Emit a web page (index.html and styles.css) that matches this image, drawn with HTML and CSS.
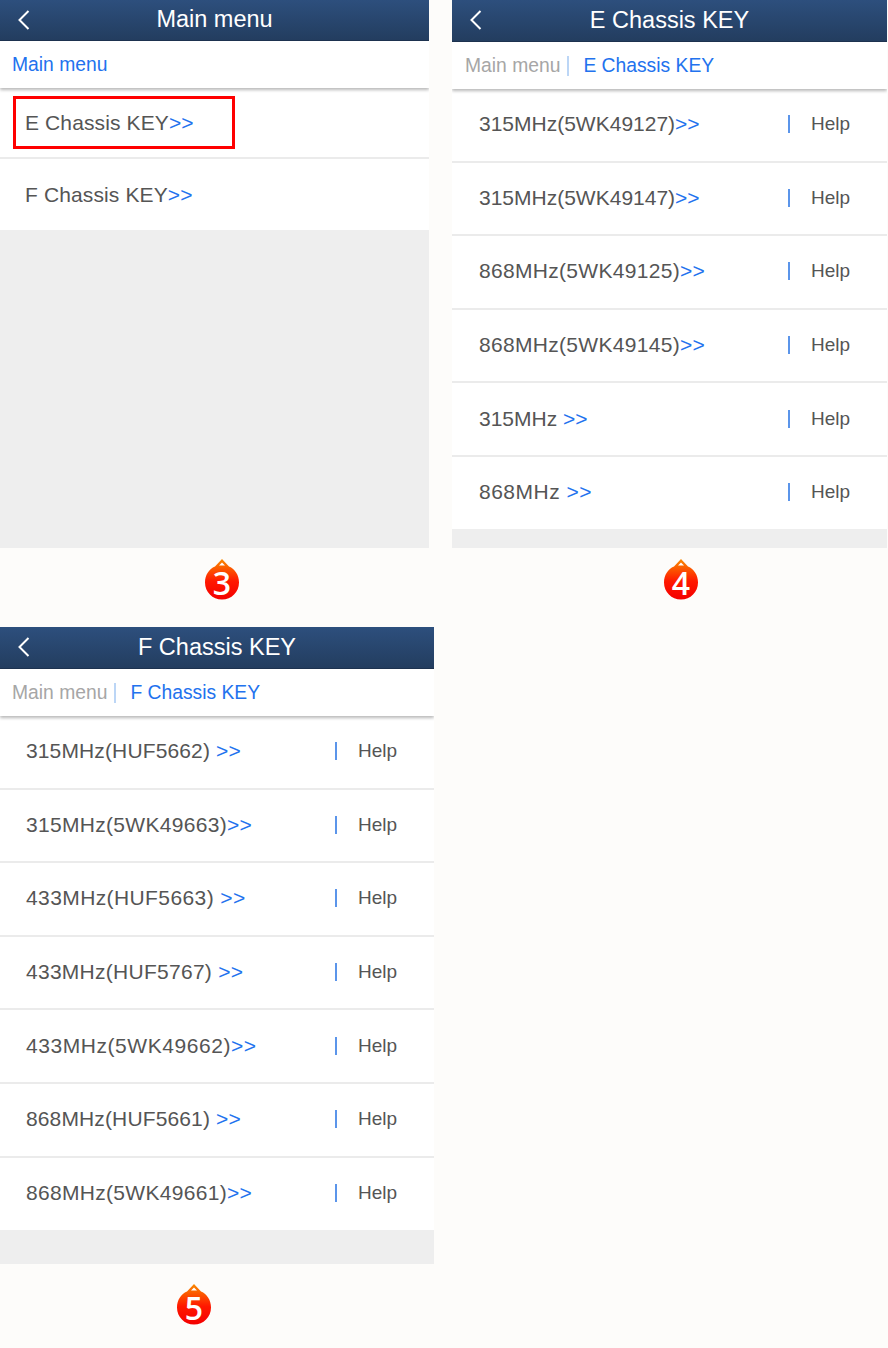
FILE: index.html
```html
<!DOCTYPE html>
<html lang="en">
<head>
<meta charset="utf-8">
<title>Chassis KEY</title>
<link rel="stylesheet" href="styles.css">
</head>
<body>
<div class="sheet">
  <div class="col col-left">
    <section class="screen screen-main">
      <header class="bar"><svg class="back" viewBox="0 0 13 20"><path d="M11.500 1 2.500 10l9 9"/></svg><h1>Main menu</h1></header>
      <nav class="crumbs"><span class="here">Main menu</span></nav>
      <ul class="menu">
        <li class="row row-main"><span class="marked"></span><span class="label">E Chassis KEY<b>&gt;&gt;</b></span></li>
        <li class="row row-main"><span class="label">F Chassis KEY<b>&gt;&gt;</b></span></li>
      </ul>
    </section>
    <div class="step step-3">
      <svg class="drop" viewBox="0 0 34 41"><defs><linearGradient id="g3" x1="0" y1="0" x2="0" y2="1"><stop offset="0" stop-color="#f98a00"/><stop offset=".55" stop-color="#ff1800"/><stop offset="1" stop-color="#f40000"/></linearGradient></defs><path fill="url(#g3)" d="M17 0 24 7.500C30 10 34 16 34 23.500 34 33 26.500 40.500 17 40.500S0 33 0 23.500C0 16 4 10 10 7.500Z"/><path fill="#fff" d="M17 3.500 20 6.500H14Z"/></svg>
      <span>3</span>
    </div>
    <section class="screen screen-f">
      <header class="bar"><svg class="back" viewBox="0 0 13 20"><path d="M11.500 1 2.500 10l9 9"/></svg><h1>F Chassis KEY</h1></header>
      <nav class="crumbs"><span class="up">Main menu</span><span class="here">F Chassis KEY</span></nav>
      <ul class="menu">
        <li class="row"><span class="label t2">315MHz(HUF5662) <b>&gt;&gt;</b></span><span class="help">Help</span></li>
        <li class="row"><span class="label t5">315MHz(5WK49663)<b>&gt;&gt;</b></span><span class="help">Help</span></li>
        <li class="row"><span class="label t6">433MHz(HUF5663) <b>&gt;&gt;</b></span><span class="help">Help</span></li>
        <li class="row"><span class="label t4">433MHz(HUF5767) <b>&gt;&gt;</b></span><span class="help">Help</span></li>
        <li class="row"><span class="label t9">433MHz(5WK49662)<b>&gt;&gt;</b></span><span class="help">Help</span></li>
        <li class="row"><span class="label t2">868MHz(HUF5661) <b>&gt;&gt;</b></span><span class="help">Help</span></li>
        <li class="row"><span class="label t5">868MHz(5WK49661)<b>&gt;&gt;</b></span><span class="help">Help</span></li>
      </ul>
    </section>
    <div class="step step-5">
      <svg class="drop" viewBox="0 0 34 41"><defs><linearGradient id="g5" x1="0" y1="0" x2="0" y2="1"><stop offset="0" stop-color="#f98a00"/><stop offset=".55" stop-color="#ff1800"/><stop offset="1" stop-color="#f40000"/></linearGradient></defs><path fill="url(#g5)" d="M17 0 24 7.500C30 10 34 16 34 23.500 34 33 26.500 40.500 17 40.500S0 33 0 23.500C0 16 4 10 10 7.500Z"/><path fill="#fff" d="M17 3.500 20 6.500H14Z"/></svg>
      <span>5</span>
    </div>
  </div>
  <div class="col col-right">
    <section class="screen screen-e">
      <header class="bar"><svg class="back" viewBox="0 0 13 20"><path d="M11.500 1 2.500 10l9 9"/></svg><h1>E Chassis KEY</h1></header>
      <nav class="crumbs"><span class="up">Main menu</span><span class="here">E Chassis KEY</span></nav>
      <ul class="menu">
        <li class="row"><span class="label">315MHz(5WK49127)<b>&gt;&gt;</b></span><span class="help">Help</span></li>
        <li class="row"><span class="label">315MHz(5WK49147)<b>&gt;&gt;</b></span><span class="help">Help</span></li>
        <li class="row"><span class="label t5">868MHz(5WK49125)<b>&gt;&gt;</b></span><span class="help">Help</span></li>
        <li class="row"><span class="label t5">868MHz(5WK49145)<b>&gt;&gt;</b></span><span class="help">Help</span></li>
        <li class="row"><span class="label">315MHz <b>&gt;&gt;</b></span><span class="help">Help</span></li>
        <li class="row"><span class="label t-short">868MHz <b>&gt;&gt;</b></span><span class="help">Help</span></li>
      </ul>
    </section>
    <div class="step step-4">
      <svg class="drop" viewBox="0 0 34 41"><defs><linearGradient id="g4" x1="0" y1="0" x2="0" y2="1"><stop offset="0" stop-color="#f98a00"/><stop offset=".55" stop-color="#ff1800"/><stop offset="1" stop-color="#f40000"/></linearGradient></defs><path fill="url(#g4)" d="M17 0 24 7.500C30 10 34 16 34 23.500 34 33 26.500 40.500 17 40.500S0 33 0 23.500C0 16 4 10 10 7.500Z"/><path fill="#fff" d="M17 3.500 20 6.500H14Z"/></svg>
      <span>4</span>
    </div>
  </div>
</div>
</body>
</html>
```
FILE: styles.css
```css
* { box-sizing: border-box; }
html, body { margin: 0; padding: 0; }
body {
  width: 888px;
  height: 1348px;
  overflow: hidden;
  background: #fdfcfa;
  font-family: "Liberation Sans", Arial, sans-serif;
  color: #555;
}
.sheet { display: flex; align-items: flex-start; }
.col-left { width: 452px; }
.col-right { width: 436px; }

.screen { background: #eee; display: flex; flex-direction: column; overflow: hidden; }
.screen-main { width: 429px; height: 548px; }
.screen-e { width: 435px; height: 548px; }
.screen-f { width: 434px; height: 637px; }

.bar {
  height: 42px;
  flex: none;
  display: flex;
  align-items: center;
  justify-content: center;
  background: linear-gradient(#2d4f7d, #233d5f);
  border-bottom: 1px solid #1e3350;
  position: relative;
}
.screen-main .bar { height: 41px; }
.bar h1 { margin: 0 0 1px; font-size: 23.500px; font-weight: 400; color: #fff; }
.back {
  position: absolute;
  left: 17px;
  top: 10px;
  width: 13px;
  height: 20px;
  fill: none;
  stroke: #fff;
  stroke-width: 2;
}

.crumbs {
  height: 47px;
  flex: none;
  display: flex;
  align-items: center;
  padding: 0 12px;
  background: #fff;
  font-size: 19.300px;
  box-shadow: 0 2px 3px rgba(0, 0, 0, .28);
  position: relative;
}
.here { color: #2272ee; }
.up { color: #a6a6a6; padding-right: 7px; border-right: 2px solid #bcd6f6; line-height: 20px; margin-right: 14px; }
.screen-e .crumbs { padding-left: 13px; }

.menu { list-style: none; margin: 0; padding: 0; background: #fff; }
.row {
  height: 73.600px;
  display: flex;
  align-items: center;
  justify-content: space-between;
  padding: 0 0 1px 27px;
  border-bottom: 2px solid #ebebeb;
  position: relative;
}
.row:last-child { border-bottom: 0; height: 72px; }
.label { font-size: 21px; color: #555; }
.label b { font-weight: 400; color: #2272ee; }
.t2 { letter-spacing: .13px; }
.t4 { letter-spacing: .27px; }
.t5 { letter-spacing: .31px; }
.t6 { letter-spacing: .4px; }
.t9 { letter-spacing: .56px; }
.t-short { letter-spacing: .5px; }
.help {
  width: 100px;
  height: 18px;
  display: flex;
  align-items: center;
  padding-left: 21px;
  margin-right: -1px;
  font-size: 19px;
  color: #555;
  border-left: 2px solid #5b95ea;
}
.screen-f .row { padding-left: 26px; }

.row.row-main { height: 71px; padding: 0 0 0 25px; justify-content: flex-start; }
.row-main .label { letter-spacing: .12px; }
.marked {
  position: absolute;
  left: 13px;
  top: 8px;
  width: 222px;
  height: 53px;
  border: 3px solid #f00;
}

.step { position: relative; width: 34px; height: 41px; }
.drop { display: block; width: 34px; height: 41px; }
.step span {
  position: absolute;
  left: 0;
  right: 0;
  top: 7px;
  text-align: center;
  font-family: "Open Sans", sans-serif;
  font-size: 32px;
  line-height: 34px;
  font-weight: 600;
  color: #fff;
}
.step-3 { margin: 11px 0 27px 205px; }
.step-4 { margin: 11px 0 0 212px; }
.step-5 { margin: 20px 0 0 177px; }
```
